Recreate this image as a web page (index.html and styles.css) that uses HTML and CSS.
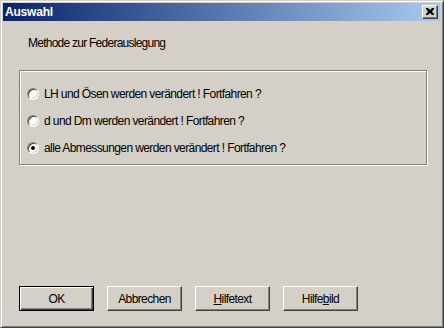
FILE: index.html
```html
<!DOCTYPE html>
<html>
<head>
<meta charset="utf-8">
<link rel="stylesheet" href="styles.css">
</head>
<body>
<div class="window">
  <div class="titlebar">
    <span class="title">Auswahl</span>
    <span class="close">
      <svg width="8" height="7" viewBox="0 0 8 7"><path d="M0 0h2l2 2 2-2h2v1l-2 2.5 2 2.5v1h-2l-2-2-2 2h-2v-1l2-2.5-2-2.5z" fill="#000"/></svg>
    </span>
  </div>
  <div class="client">
    <div class="label">Methode zur Federauslegung</div>
    <div class="group">
      <div class="radio-row"><span class="radio"></span><span>LH und Ösen werden verändert ! Fortfahren ?</span></div>
      <div class="radio-row"><span class="radio"></span><span>d und Dm werden verändert ! Fortfahren ?</span></div>
      <div class="radio-row"><span class="radio checked"></span><span>alle Abmessungen werden verändert ! Fortfahren ?</span></div>
    </div>
    <div class="buttons">
      <div class="btn default"><span>OK</span></div>
      <div class="btn"><span>Abbrechen</span></div>
      <div class="btn"><span><u>H</u>ilfetext</span></div>
      <div class="btn"><span>Hilfe<u>b</u>ild</span></div>
    </div>
  </div>
</div>
</body>
</html>
```
FILE: styles.css
```css
html, body {
  margin: 0;
  padding: 0;
  background: #D4D0C8;
}
body {
  font-family: "Liberation Sans", Arial, sans-serif;
  font-size: 12px;
  letter-spacing: -0.6px;
  color: #000;
}
.window {
  width: 444px;
  height: 328px;
  box-sizing: border-box;
  background: #D4D0C8;
  border-style: solid;
  border-width: 1px;
  border-color: #D4D0C8 #404040 #404040 #D4D0C8;
  padding: 2px 3px 3px 2px;
  box-shadow: inset 1px 1px 0 #FFFFFF, inset -1px -1px 0 #808080;
  display: flex;
  flex-direction: column;
}
.titlebar {
  height: 18px;
  background: linear-gradient(to right, #0A246A, #A6CAF0);
  display: flex;
  align-items: center;
  justify-content: space-between;
  padding: 0 2px 0 2px;
}
.title {
  color: #fff;
  font-weight: bold;
  font-size: 12px;
  letter-spacing: -0.2px;
  font-family: "Liberation Sans", Tahoma, sans-serif;
}
.close {
  width: 16px;
  height: 14px;
  box-sizing: border-box;
  background: #D4D0C8;
  border-style: solid;
  border-width: 1px;
  border-color: #FFFFFF #404040 #404040 #FFFFFF;
  box-shadow: inset -1px -1px 0 #808080;
  display: flex;
  align-items: center;
  justify-content: center;
  padding: 0 1px 1px 0;
}
.close svg { display: block; }
.client {
  flex: 1;
  display: flex;
  flex-direction: column;
  padding: 0 0 0 16px;
}
.label {
  margin: 15px 0 0 9px;
  line-height: 15px;
  letter-spacing: -0.75px;
}
.group {
  margin-top: 19px;
  width: 399px;
  height: 78px;
  border: 1px solid #808080;
  box-shadow: inset 1px 1px 0 #FFFFFF, 1px 1px 0 #FFFFFF;
  display: flex;
  flex-direction: column;
  padding: 15px 0 0 7px;
  gap: 12px;
}
.radio-row {
  display: flex;
  align-items: center;
  height: 15px;
  gap: 5px;
}
.radio {
  width: 12px;
  height: 12px;
  border-radius: 50%;
  box-sizing: border-box;
  background: #fff;
  border: 1px solid;
  border-color: #808080 #FFFFFF #FFFFFF #808080;
  box-shadow: inset 1px 1px 0 #404040, inset -1px -1px 0 #D4D0C8;
  position: relative;
  flex: none;
}
.radio.checked::after {
  content: "";
  position: absolute;
  left: 3px;
  top: 3px;
  width: 4px;
  height: 4px;
  border-radius: 50%;
  background: #000;
}
.buttons {
  margin-top: auto;
  margin-bottom: 13px;
  display: flex;
  gap: 13px;
}
.btn {
  width: 75px;
  height: 25px;
  box-sizing: border-box;
  border-style: solid;
  border-width: 1px;
  border-color: #FFFFFF #404040 #404040 #FFFFFF;
  box-shadow: inset -1px -1px 0 #808080;
  display: flex;
  align-items: center;
  justify-content: center;
}
.btn.default {
  border: 1px solid #000;
  box-shadow: inset 1px 1px 0 #FFFFFF, inset -1px -1px 0 #404040, inset -2px -2px 0 #808080;
}
.btn u { text-decoration: underline; text-underline-offset: 1px; }
```
